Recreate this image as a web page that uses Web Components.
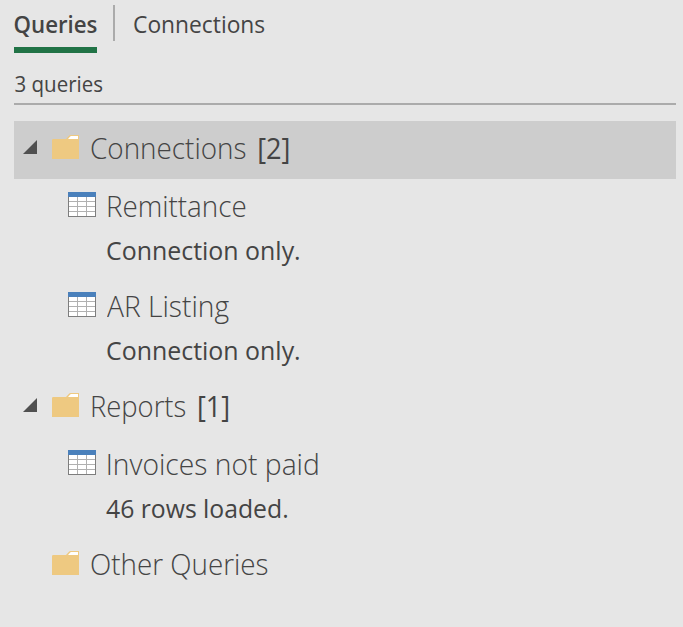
<!DOCTYPE html>
<html lang="en">
<head>
<meta charset="utf-8">
<title>Queries</title>
<style>
html, body { margin: 0; height: 100%; background: #e6e6e6; overflow: hidden; }
body { font-family: "Open Sans", "Noto Sans", sans-serif; color: #444; }
</style>
</head>
<body>
<query-pane></query-pane>
<script>
const define = (name, markup, ready) => {
  const template = document.createElement('template');
  template.innerHTML = markup;
  customElements.define(name, class extends HTMLElement {
    constructor() {
      super();
      this.attachShadow({ mode: 'open' }).append(template.content.cloneNode(true));
    }
    connectedCallback() { if (ready) ready.call(this); }
  });
};

// A single line of text whose glyphs span exactly the given width.
// The optional inset moves the glyphs to the right inside the line.
define('fit-text', `
<style>
:host { display: block; flex: none; white-space: nowrap; }
span { display: inline-block; transform-origin: 0 50%; }
</style><span><slot></slot></span>`, function () {
  const style = getComputedStyle(this);
  const context = document.createElement('canvas').getContext('2d');
  context.font = style.fontWeight + ' ' + style.fontSize + ' ' + style.fontFamily;
  const m = context.measureText(this.textContent.trim());
  const width = parseFloat(this.getAttribute('width'));
  const inset = parseFloat(this.getAttribute('inset') || 0);
  const scale = width / (m.actualBoundingBoxRight + m.actualBoundingBoxLeft);
  this.style.width = width + 'px';
  this.shadowRoot.querySelector('span').style.transform =
    'translateX(' + (m.actualBoundingBoxLeft * scale + inset) + 'px) scaleX(' + scale + ')';
});

define('folder-icon', `
<style>:host { display: block; width: 28px; height: 25px; } svg { display: block; }</style>
<svg width="28" height="25" viewBox="0 0 28 25">
<path d="M0 5.2Q0 4 1.2 4H14L17 0.7Q17.6 0 18.6 0H27V24H0Z" fill="#eec981"/>
<path d="M16 4L18.2 1.4Q18.5 1 19 1H26V4Z" fill="#fff"/>
</svg>`);

define('table-icon', `
<style>:host { display: block; width: 28px; height: 25px; } svg { display: block; }</style>
<svg width="28" height="25" viewBox="0 0 28 25" shape-rendering="crispEdges">
<path fill="#7d7d7d" d="M0 5H28V25H0Z"/>
<path fill="#fff" d="M1 5H27V24H1Z"/>
<path fill="#b0b0b0" d="M9 5h1v19h-1zM18 5h1v19h-1zM1 9h26v1H1zM1 14h26v1H1zM1 19h26v1H1z"/>
<path fill="#4a80bb" d="M0 0H28V5H0Z"/>
</svg>`);

define('pane-tab', `
<style>
:host { display: block; box-sizing: border-box; height: 53px; font-size: 23.5px; line-height: 48px; }
:host([active]) { font-weight: 600; border-bottom: 6px solid #217346; }
</style><slot></slot>`);

define('query-group', `
<style>
:host { display: block; }
header { display: flex; height: 58px; box-sizing: border-box; padding-left: 9px; font-size: 29px; font-weight: 300; line-height: 54px; }
:host([selected]) header { background: #cdcdcd; }
.arrow { width: 14px; margin: 19px 15px 0 0; height: 14px; }
.leaf .arrow { visibility: hidden; }
folder-icon { margin: 14px 11px 0 0; }
::slotted([slot=count]) { font-weight: 400; }
slot[name=count] { display: block; margin-left: 12px; }
</style>
<header><svg class="arrow" viewBox="0 0 14 14"><path d="M14 0V14H0Z" fill="#505050"/></svg><folder-icon></folder-icon><slot name="title"></slot><slot name="count"></slot></header>
<slot></slot>`, function () {
  this.shadowRoot.querySelector('header').classList.toggle('leaf', this.hasAttribute('leaf'));
});

define('query-item', `
<style>
:host { display: flex; height: 100px; box-sizing: border-box; padding-left: 54px; }
table-icon { margin: 13px 11px 0 0; }
.title { font-size: 29px; font-weight: 300; line-height: 54px; height: 54px; }
.status { font-size: 25.5px; line-height: 35px; }
</style>
<table-icon></table-icon><div><div class="title"><slot name="title"></slot></div><div class="status"><slot></slot></div></div>`);

define('query-pane', `
<style>
:host { display: block; padding: 0 7px 0 14px; }
nav { display: flex; }
hr { width: 2px; height: 36px; border: 0; margin: 5px 19px 0 16px; background: #ababab; }
.summary { box-sizing: border-box; height: 52px; padding-top: 8px; font-size: 22px; line-height: 44px; border-bottom: 2px solid #ababab; margin-bottom: 16px; }
</style>
<nav>
<pane-tab active><fit-text width="82.5" inset="0.5">Queries</fit-text></pane-tab><hr>
<pane-tab><fit-text width="131">Connections</fit-text></pane-tab>
</nav>
<div class="summary"><fit-text width="88" inset="0.5">3 queries</fit-text></div>
<query-group selected>
<fit-text slot="title" width="155">Connections</fit-text><fit-text slot="count" width="30" inset="1">[2]</fit-text>
<query-item><fit-text slot="title" width="138" inset="0.8">Remittance</fit-text><fit-text width="192">Connection only.</fit-text></query-item>
<query-item><fit-text slot="title" width="122">AR Listing</fit-text><fit-text width="192">Connection only.</fit-text></query-item>
</query-group>
<query-group>
<fit-text slot="title" width="94" inset="0.8">Reports</fit-text><fit-text slot="count" width="30" inset="1.8">[1]</fit-text>
<query-item><fit-text slot="title" width="210" inset="0.6">Invoices not paid</fit-text><fit-text width="181" inset="-1">46 rows loaded.</fit-text></query-item>
</query-group>
<query-group leaf>
<fit-text slot="title" width="177">Other Queries</fit-text>
</query-group>`);
</script>
</body>
</html>
